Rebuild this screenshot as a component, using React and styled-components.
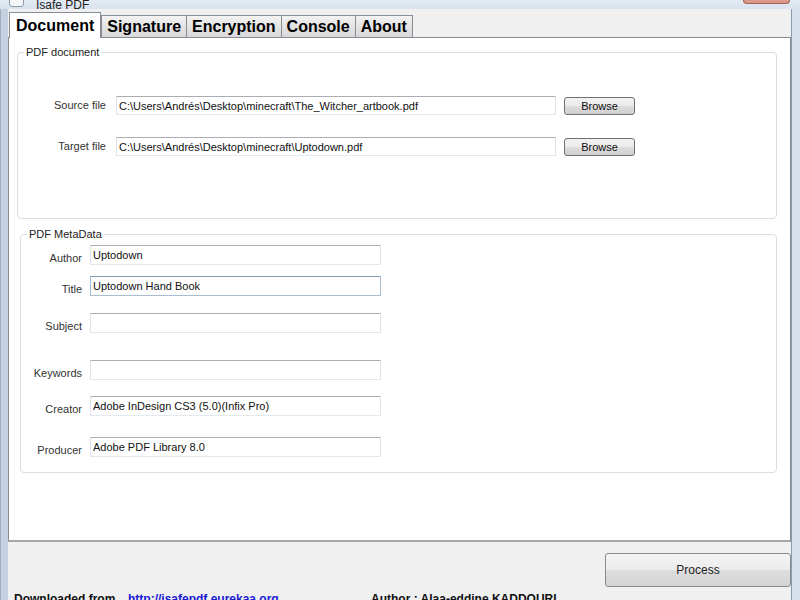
import styled, { createGlobalStyle } from "styled-components"

const GlobalStyle = createGlobalStyle`
    html, body {
        margin: 0;
        padding: 0;
        background: #cfdbe8;
        font-family: "Liberation Sans", Arial, sans-serif;
    }
`

const tabs = ['Document', 'Signature', 'Encryption', 'Console', 'About']

const metaRows = [
    { label: 'Author', value: 'Uptodown', top: 5 },
    { label: 'Title', value: 'Uptodown Hand Book', top: 11, focused: true },
    { label: 'Subject', value: '', top: 17 },
    { label: 'Keywords', value: '', top: 27 },
    { label: 'Creator', value: 'Adobe InDesign CS3 (5.0)(Infix Pro)', top: 16 },
    { label: 'Producer', value: 'Adobe PDF Library 8.0', top: 21 },
]

function App() {
    return (
        <Window>
            <GlobalStyle />
            <TitleBar>
                <AppIcon />
                <Caption>Isafe PDF</Caption>
                <CloseButton />
            </TitleBar>
            <Frame>
                <Client>
                    <TabStrip>
                        {tabs.map((t, i) => (
                            <Tab key={t} active={i === 0}>{t}</Tab>
                        ))}
                    </TabStrip>
                    <TabPage>
                        <Group marginLeft="8px" marginTop="8px" height="173px">
                            <Legend>PDF document</Legend>
                            <FileRow top="38px">
                                <FileLabel>Source file</FileLabel>
                                <TextBox width="440px" value="C:\Users\Andrés\Desktop\minecraft\The_Witcher_artbook.pdf" readOnly />
                                <SmallButton>Browse</SmallButton>
                            </FileRow>
                            <FileRow top="22px">
                                <FileLabel>Target file</FileLabel>
                                <TextBox width="440px" value="C:\Users\Andrés\Desktop\minecraft\Uptodown.pdf" readOnly />
                                <SmallButton>Browse</SmallButton>
                            </FileRow>
                        </Group>
                        <Group marginLeft="11px" marginTop="9px" height="245px">
                            <Legend>PDF MetaData</Legend>
                            {metaRows.map(r => (
                                <MetaRow key={r.label} top={`${r.top}px`}>
                                    <MetaLabel>{r.label}</MetaLabel>
                                    <TextBox width="291px" tall focused={r.focused} value={r.value} readOnly />
                                </MetaRow>
                            ))}
                        </Group>
                    </TabPage>
                    <BottomPanel>
                        <ProcessButton>Process</ProcessButton>
                        <Footer>
                            <FooterText width="114px">Downloaded from</FooterText>
                            <FooterLink width="243px">http://isafepdf.eurekaa.org</FooterLink>
                            <FooterText>Author : Alaa-eddine KADDOURI</FooterText>
                        </Footer>
                    </BottomPanel>
                </Client>
            </Frame>
        </Window>
    )
}

const Window = styled.div`
    width: 800px;
    height: 600px;
    overflow: hidden;
    display: flex;
    flex-direction: column;
    background: linear-gradient(to right, #c3d1e1, #d6e1ec);
`

const TitleBar = styled.div`
    height: 9px;
    flex: none;
    overflow: hidden;
    display: flex;
    align-items: flex-end;
    padding-left: 9px;
    background: linear-gradient(#e4ebf3, #d9e3ee);
`

const AppIcon = styled.div`
    width: 13px;
    height: 13px;
    margin-bottom: 2px;
    border: 1px solid #8d99a8;
    border-radius: 3px;
    background: #f4f6f8;
    flex: none;
`

const Caption = styled.span`
    font-size: 12px;
    color: #222;
    margin-left: 12px;
    margin-bottom: -2px;
    line-height: 12px;
`

const CloseButton = styled.div`
    margin-left: auto;
    margin-right: 10px;
    align-self: flex-start;
    width: 45px;
    height: 3px;
    background: #d99a8a;
    border: 1px solid #a86050;
    border-top: none;
    border-radius: 0 0 4px 4px;
`

const Frame = styled.div`
    flex: 1;
    display: flex;
    padding: 0 8px 0 7px;
    border-left: 1px solid #9fb0c4;
    min-height: 0;
`

const Client = styled.div`
    flex: 1;
    display: flex;
    flex-direction: column;
    background: #f0f0f0;
    border-right: 1px solid #8e9bab;
    min-height: 0;
`

const TabStrip = styled.div`
    display: flex;
    align-items: flex-end;
    height: 28px;
    padding-left: 1px;
    flex: none;
`

const Tab = styled.div`
    height: ${props => props.active ? '25px' : '21px'};
    padding: ${props => props.active ? '0 6px 0 6px' : '0 5px'};
    display: flex;
    align-items: center;
    font-size: 16px;
    font-weight: bold;
    color: #000;
    border: 1px solid #898c95;
    border-bottom: none;
    margin-right: ${props => props.active ? '0' : '-1px'};
    margin-bottom: ${props => props.active ? '-1px' : '0'};
    background: ${props => props.active ? '#ffffff' : 'linear-gradient(#f3f3f3, #e3e3e3 50%, #d9d9d9)'};
    position: relative;
    z-index: ${props => props.active ? 2 : 1};
`

const TabPage = styled.div`
    height: 505px;
    flex: none;
    background: #fff;
    border: 1px solid #898c95;
    border-bottom: 2px solid #a7a7a7;
    display: flex;
    flex-direction: column;
    box-sizing: border-box;
`

const Group = styled.fieldset`
    margin: ${props => props.marginTop} 13px 0 ${props => props.marginLeft};
    height: ${props => props.height};
    box-sizing: border-box;
    border: 1px solid #d5dfe5;
    border-radius: 4px;
    padding: 0;
    min-width: 0;
`

const Legend = styled.legend`
    font-size: 11px;
    color: #222;
    padding: 0 2px;
    margin-left: 6px;
    line-height: 12px;
`

const FileRow = styled.div`
    display: flex;
    align-items: center;
    margin-top: ${props => props.top};
`

const FileLabel = styled.span`
    width: 88px;
    text-align: right;
    font-size: 11px;
    color: #333;
    margin-right: 10px;
    margin-top: -2px;
`

const TextBox = styled.input`
    width: ${props => props.width};
    height: ${props => props.tall ? '20px' : '19px'};
    box-sizing: border-box;
    border: 1px solid #dbdfe6;
    border-top-color: ${props => props.focused ? '#7f9db9' : '#abadb3'};
    border-left-color: ${props => props.focused ? '#a9bdd2' : '#e2e3ea'};
    border-right-color: ${props => props.focused ? '#a9bdd2' : '#e2e3ea'};
    border-bottom-color: ${props => props.focused ? '#a9bdd2' : '#e3e9ef'};
    padding: 0 2px;
    font-family: "Liberation Sans", Arial, sans-serif;
    font-size: 11px;
    color: #111;
    background: #fff;
    outline: none;
`

const SmallButton = styled.button`
    margin-left: 8px;
    width: 71px;
    height: 18px;
    padding: 0;
    font-family: "Liberation Sans", Arial, sans-serif;
    font-size: 11px;
    color: #111;
    border: 1px solid #707070;
    border-radius: 3px;
    background: linear-gradient(#f2f2f2, #ebebeb 50%, #dddddd 51%, #cfcfcf);
`

const MetaRow = styled.div`
    display: flex;
    align-items: center;
    margin-top: ${props => props.top};
`

const MetaLabel = styled.span`
    width: 61px;
    text-align: right;
    font-size: 11px;
    color: #333;
    margin-right: 8px;
    margin-top: 5px;
`

const BottomPanel = styled.div`
    flex: 1;
    display: flex;
    flex-direction: column;
    min-height: 0;
`

const ProcessButton = styled.button`
    flex: none;
    align-self: flex-end;
    margin-top: 11px;
    width: 186px;
    height: 34px;
    padding: 0;
    font-family: "Liberation Sans", Arial, sans-serif;
    font-size: 12px;
    color: #222;
    border: 1px solid #8a8a8a;
    border-radius: 3px;
    background: linear-gradient(#f4f4f4, #ececec 50%, #dedede 51%, #d2d2d2);
`

const Footer = styled.div`
    display: flex;
    align-items: flex-start;
    padding-left: 6px;
    margin-top: 4px;
    height: 16px;
    flex: none;
`

const FooterText = styled.span`
    width: ${props => props.width || 'auto'};
    flex: none;
    font-size: 12px;
    font-weight: bold;
    color: #111;
    line-height: 16px;
`

const FooterLink = styled.span`
    width: ${props => props.width};
    flex: none;
    font-size: 12px;
    font-weight: bold;
    color: #1a1ad0;
    line-height: 16px;
`

export default App
